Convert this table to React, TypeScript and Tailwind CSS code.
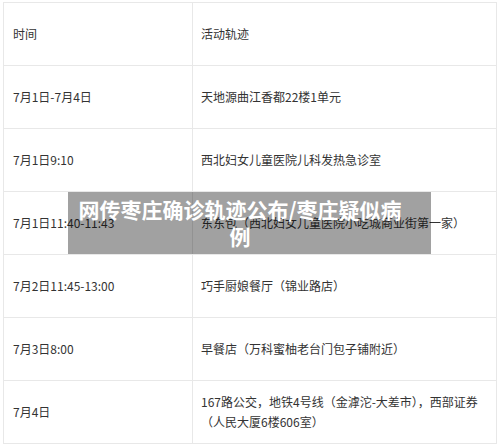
import React from "react";

const rows: [string, string][] = [
  ["时间", "活动轨迹"],
  ["7月1日-7月4日", "天地源曲江香都22楼1单元"],
  ["7月1日9:10", "西北妇女儿童医院儿科发热急诊室"],
  ["7月1日11:40-11:43", "东东包（西北妇女儿童医院小吃城商业街第一家）"],
  ["7月2日11:45-13:00", "巧手厨娘餐厅（锦业路店）"],
  ["7月3日8:00", "早餐店（万科蜜柚老台门包子铺附近）"],
  ["7月4日", "167路公交，地铁4号线（金滹沱-大差市），西部证券（人民大厦6楼606室）"],
];

const App: React.FC = () => {
  return (
    <div
      className="relative w-[500px] h-[448px] overflow-hidden bg-white pl-[3px] pt-[2px]"
      style={{ fontFamily: '"Noto Sans CJK SC", "Noto Sans", sans-serif' }}
    >
      <table className="w-[494px] border-collapse table-fixed text-[12px] leading-[20px] text-[#333333]">
        <colgroup>
          <col className="w-[189px]" />
          <col />
        </colgroup>
        <tbody>
          {rows.map((r, i) => (
            <tr key={i} className="h-[63px]">
              <td className="border border-[#e8e8e8] pl-[9px] pr-2 align-middle">{r[0]}</td>
              <td className="border border-[#e8e8e8] pl-[8px] pr-[6px] align-middle">{r[1]}</td>
            </tr>
          ))}
        </tbody>
      </table>

      {/* title banner over the table */}
      <div className="absolute left-[68px] top-[192px] w-[363px] h-[62px] bg-black/[0.37] flex items-center pl-[4px]">
        <p className="w-[336px] text-center text-white font-bold text-[21px] leading-[27px]">
          网传枣庄确诊轨迹公布/枣庄疑似病例
        </p>
      </div>
    </div>
  );
};

export default App;
